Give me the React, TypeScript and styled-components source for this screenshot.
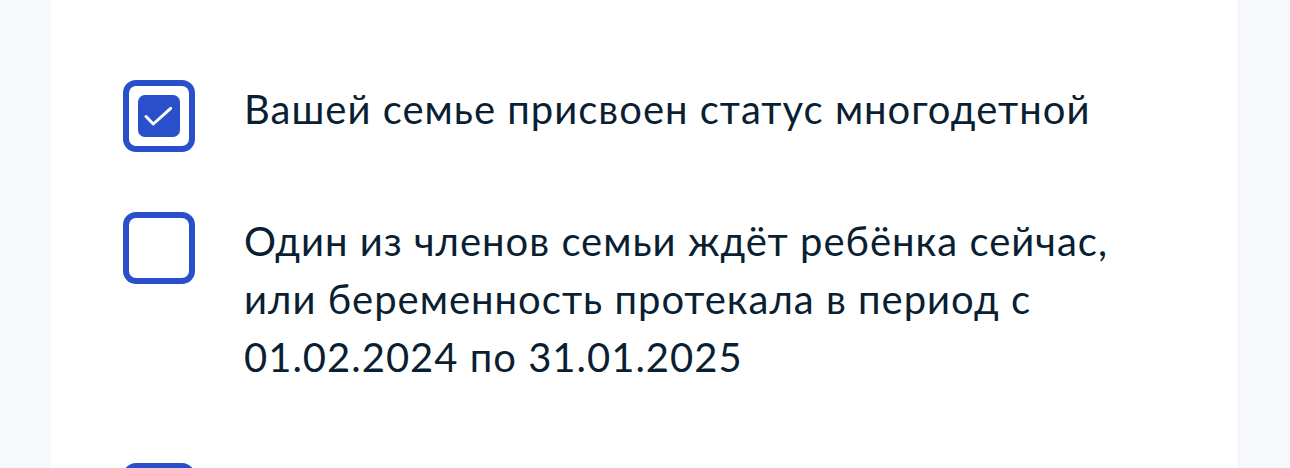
import React, { useState } from 'react';
import styled, { createGlobalStyle } from 'styled-components';

const GlobalStyle = createGlobalStyle`
  html, body {
    margin: 0;
    padding: 0;
    background: #f7f8fc;
    overflow: hidden;
  }
  body {
    font-family: Lato, "Noto Sans", sans-serif;
    color: #0b1f33;
  }
`;

const Page = styled.div`
  height: 468px;
  padding-left: 51px;
  display: flex;
  overflow: hidden;
`;

const Card = styled.section`
  width: 1188px;
  background: #ffffff;
  border-right: 1px solid #f1f2f6;
  padding: 80px 72px 0;
  box-sizing: border-box;
`;

const List = styled.ul`
  list-style: none;
  margin: 0;
  padding: 0;
  display: flex;
  flex-direction: column;
`;

const Item = styled.li<{ $space: number }>`
  display: flex;
  align-items: flex-start;
  gap: 49px;
  margin-bottom: ${({ $space }) => $space}px;
  cursor: pointer;
`;

const Box = styled.span`
  flex: 0 0 auto;
  width: 72px;
  height: 72px;
  box-sizing: border-box;
  border: 6px solid #2a4fcb;
  border-radius: 13px;
  display: flex;
  align-items: center;
  justify-content: center;
  background: #fff;
`;

const Mark = styled.span`
  width: 42px;
  height: 42px;
  border-radius: 7px;
  background: #2a4fcb;
  display: flex;
  align-items: center;
  justify-content: center;
`;

const Label = styled.span`
  font-size: 40px;
  line-height: 58px;
  letter-spacing: 1px;
  color: #0b1f33;
  max-width: 900px;
`;

type Option = { id: string; text?: React.ReactNode; space: number };

const options: Option[] = [
  { id: 'large', text: 'Вашей семье присвоен статус многодетной', space: 60 },
  {
    id: 'pregnant',
    text: (
      <>
        Один из членов семьи ждёт ребёнка сейчас,
        <br />
        или беременность протекала в период с
        <br />
        01.02.2024 по 31.01.2025
      </>
    ),
    space: 77,
  },
  { id: 'next', space: 0 },
];

function Checkbox({ checked }: { checked: boolean }) {
  return (
    <Box>
      {checked && (
        <Mark>
          <svg width="42" height="42" viewBox="0 0 42 42" fill="none">
            <path
              d="M8 21.5L15.3 29L32.7 13.3"
              stroke="#fff"
              strokeWidth="3"
              strokeLinecap="round"
              strokeLinejoin="round"
            />
          </svg>
        </Mark>
      )}
    </Box>
  );
}

export default function App() {
  const [checked, setChecked] = useState<Record<string, boolean>>({ large: true });

  return (
    <>
      <GlobalStyle />
      <Page>
        <Card>
          <List>
            {options.map((o) => (
              <Item
                key={o.id}
                $space={o.space}
                onClick={() => setChecked((s) => ({ ...s, [o.id]: !s[o.id] }))}
              >
                <Checkbox checked={!!checked[o.id]} />
                {o.text && <Label>{o.text}</Label>}
              </Item>
            ))}
          </List>
        </Card>
      </Page>
    </>
  );
}
